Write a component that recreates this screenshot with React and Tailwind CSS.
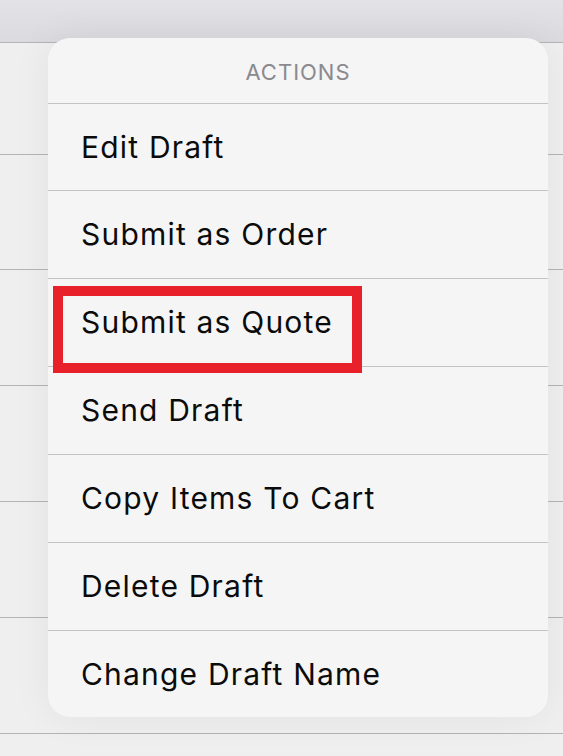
import React from 'react';

const actions = [
  "Edit Draft",
  "Submit as Order",
  "Submit as Quote",
  "Send Draft",
  "Copy Items To Cart",
  "Delete Draft",
  "Change Draft Name",
];

const App = () => {
  return (
    <div
      className="relative w-[563px] h-[756px] overflow-hidden bg-[#efeff0]"
      style={{ fontFamily: "Inter, 'Liberation Sans', sans-serif" }}
    >
      {/* Background page behind the popover */}
      <div className="h-[43px] border-b border-[#b4b4b6] bg-gradient-to-b from-[#e3e3e7] to-[#dadadf]"></div>
      <div className="h-[112px] border-b border-[#b4b4b6]"></div>
      <div className="h-[115px] border-b border-[#b4b4b6]"></div>
      <div className="h-[116px] border-b border-[#b4b4b6]"></div>
      <div className="h-[116px] border-b border-[#b4b4b6]"></div>
      <div className="h-[116px] border-b border-[#b4b4b6]"></div>
      <div className="h-[116px] border-b border-[#b4b4b6]"></div>

      {/* Actions popover */}
      <div className="absolute left-[48px] top-[38px] w-[500px] rounded-[22px] bg-[#f5f5f5] shadow-[0_0_40px_rgba(0,0,0,0.06)] overflow-hidden">
        <div className="h-[66px] flex items-center justify-center pt-[4px] border-b border-[#c3c3c5]">
          <span className="text-[22px] tracking-[1px] text-[#8a8a8e]">ACTIONS</span>
        </div>
        {actions.map((label, i) => (
          <div
            key={label}
            className={
              i === 0
                ? "h-[87px] flex items-center pl-[33px] border-b border-[#c3c3c5]"
                : i < actions.length - 1
                ? "h-[88px] flex items-center pl-[33px] border-b border-[#c3c3c5]"
                : "h-[86px] flex items-center pl-[33px]"
            }
          >
            <span className="text-[30px] tracking-[1.2px] text-[#0b0b0b]">{label}</span>
          </div>
        ))}
      </div>

      {/* Red highlight annotation */}
      <div className="absolute left-[53px] top-[286px] w-[309px] h-[87px] border-[10px] border-[#e8202a]"></div>
    </div>
  );
};

export default App;
